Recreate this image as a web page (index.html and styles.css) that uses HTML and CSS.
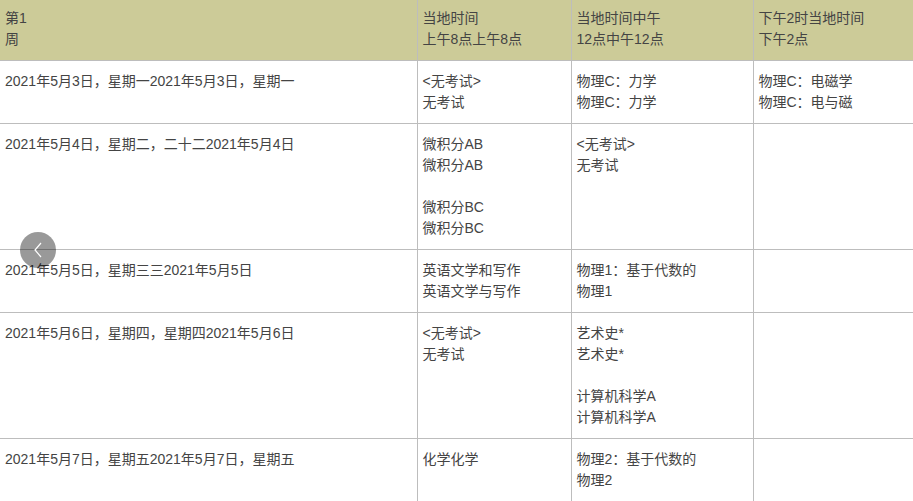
FILE: index.html
```html
<!DOCTYPE html>
<html lang="zh-CN">
<head>
<meta charset="utf-8">
<title>考试时间表</title>
<link rel="stylesheet" href="styles.css">
</head>
<body>
<div class="page">
  <table class="schedule">
    <colgroup>
      <col class="c-date">
      <col class="c-am">
      <col class="c-noon">
      <col class="c-pm">
    </colgroup>
    <thead>
      <tr>
        <th>第1<br>周</th>
        <th>当地时间<br>上午8点上午8点</th>
        <th>当地时间中午<br>12点中午12点</th>
        <th>下午2时当地时间<br>下午2点</th>
      </tr>
    </thead>
    <tbody>
      <tr>
        <td>2021年5月3日，星期一2021年5月3日，星期一</td>
        <td>&lt;无考试&gt;<br>无考试</td>
        <td>物理C：力学<br>物理C：力学</td>
        <td>物理C：电磁学<br>物理C：电与磁</td>
      </tr>
      <tr>
        <td>2021年5月4日，星期二，二十二2021年5月4日</td>
        <td>微积分AB<br>微积分AB<br><br>微积分BC<br>微积分BC</td>
        <td>&lt;无考试&gt;<br>无考试</td>
        <td></td>
      </tr>
      <tr>
        <td>2021年5月5日，星期三三2021年5月5日</td>
        <td>英语文学和写作<br>英语文学与写作</td>
        <td>物理1：基于代数的<br>物理1</td>
        <td></td>
      </tr>
      <tr>
        <td>2021年5月6日，星期四，星期四2021年5月6日</td>
        <td>&lt;无考试&gt;<br>无考试</td>
        <td>艺术史*<br>艺术史*<br><br>计算机科学A<br>计算机科学A</td>
        <td></td>
      </tr>
      <tr>
        <td>2021年5月7日，星期五2021年5月7日，星期五</td>
        <td>化学化学</td>
        <td>物理2：基于代数的<br>物理2</td>
        <td></td>
      </tr>
    </tbody>
  </table>
  <button class="prev" type="button" aria-label="上一页">
    <svg width="12" height="18" viewBox="0 0 12 18"><path d="M9 2 L3 9 L9 16" fill="none" stroke="#fff" stroke-width="1.2"/></svg>
  </button>
</div>
</body>
</html>
```
FILE: styles.css
```css
html, body {
  margin: 0;
  padding: 0;
  overflow: hidden;
  background: #fff;
}
.page {
  position: relative;
  width: 913px;
  height: 501px;
  overflow: hidden;
  font-family: "Liberation Sans", "Noto Sans CJK SC", sans-serif;
  font-size: 14px;
  line-height: 21px;
  color: #444;
}
.schedule {
  border-collapse: collapse;
  table-layout: fixed;
  width: 1000px;
}
.c-date { width: 417px; }
.c-am { width: 154px; }
.c-noon { width: 182px; }
.c-pm { width: 247px; }
.schedule th,
.schedule td {
  text-align: left;
  vertical-align: top;
  font-weight: normal;
  border: 1px solid #bdbdbd;
  padding: 10px 5px;
}
.schedule th {
  background: #cccb98;
  border-top: none;
  padding: 8px 5px 10px;
}
.schedule th:first-child,
.schedule td:first-child {
  border-left: none;
}
.prev {
  position: absolute;
  left: 20px;
  top: 232px;
  width: 36px;
  height: 36px;
  border: none;
  border-radius: 50%;
  padding: 0;
  background: rgba(0, 0, 0, 0.4);
  display: flex;
  align-items: center;
  justify-content: center;
}
```
